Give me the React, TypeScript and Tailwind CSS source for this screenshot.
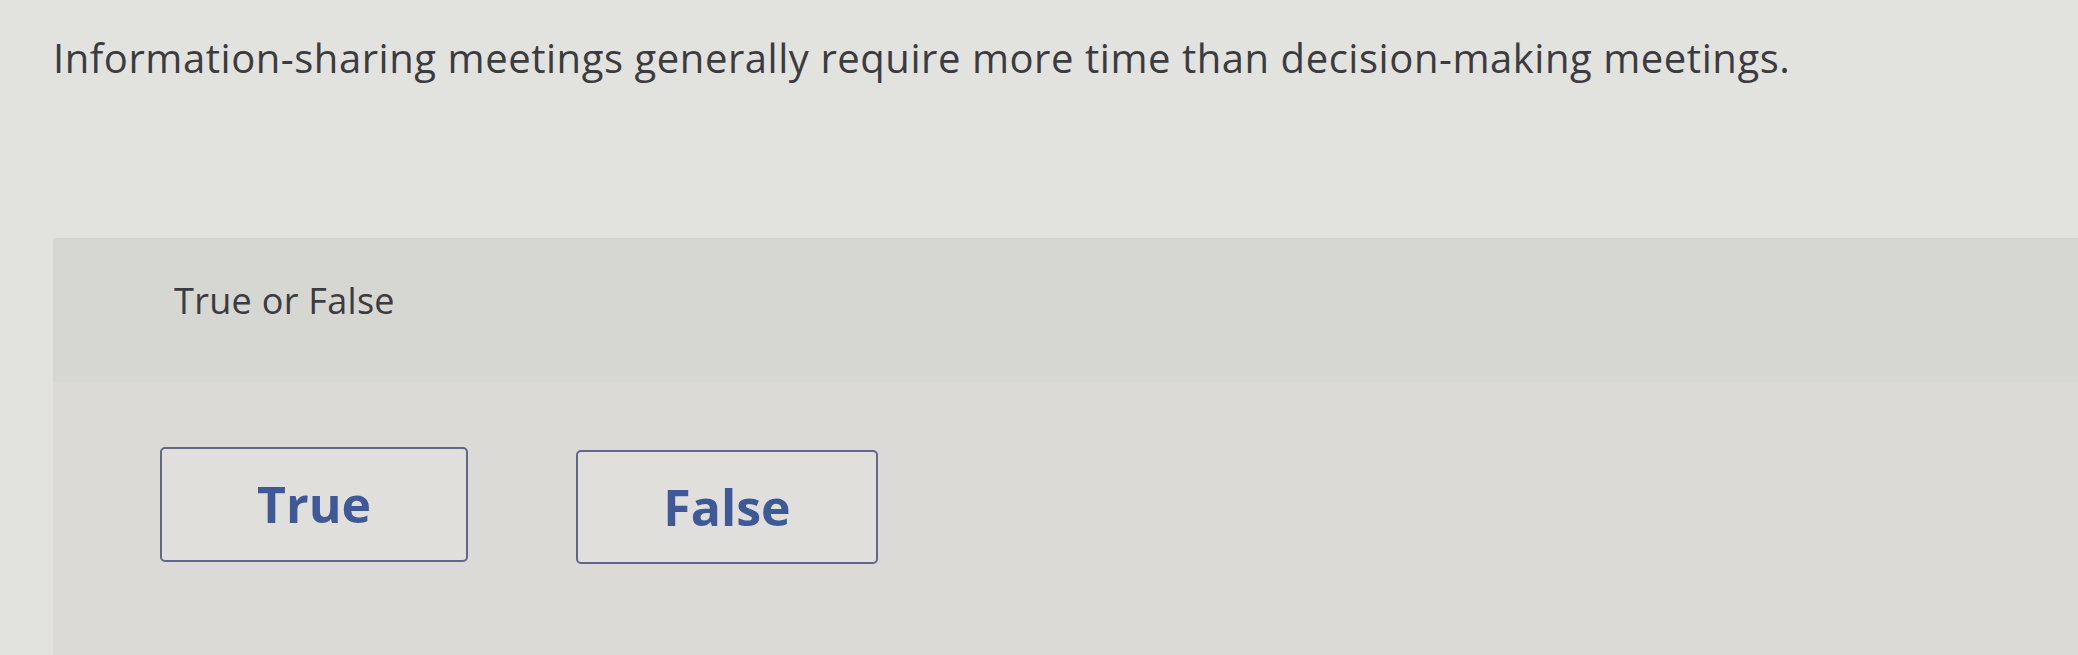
export default function App() {
  return (
    <div className="h-[655px] w-full overflow-hidden bg-[#e2e2de] font-['Open_Sans','Liberation_Sans',sans-serif]">
      <div className="flex h-full flex-col pl-[53px]">
        <h1 className="pt-[34px] text-[40px] leading-[48px] tracking-[0.55px] text-[#3b3b40]">
          Information-sharing meetings generally require more time than decision-making meetings.
        </h1>

        <section className="mt-[156px] flex flex-1 flex-col">
          <div className="flex h-[144px] items-start bg-[#d6d6d3] pl-[121px] pt-[41px]">
            <p className="text-[36px] leading-[44px] tracking-[0.3px] text-[#3b3b40]">True or False</p>
          </div>

          <div className="flex flex-1 gap-[108px] bg-[#dbdad6] pl-[107px] pt-[65px]">
            <button className="flex h-[115px] w-[308px] items-center justify-center rounded-[5px] border-2 border-[#62668c] bg-[#e0dfdb] text-[50px] font-bold text-[#3f5898]">
              True
            </button>
            <button className="mt-[3px] flex h-[114px] w-[302px] items-center justify-center rounded-[5px] border-2 border-[#62668c] bg-[#e0dfdb] text-[50px] font-bold text-[#3f5898]">
              False
            </button>
          </div>
        </section>
      </div>
    </div>
  )
}
